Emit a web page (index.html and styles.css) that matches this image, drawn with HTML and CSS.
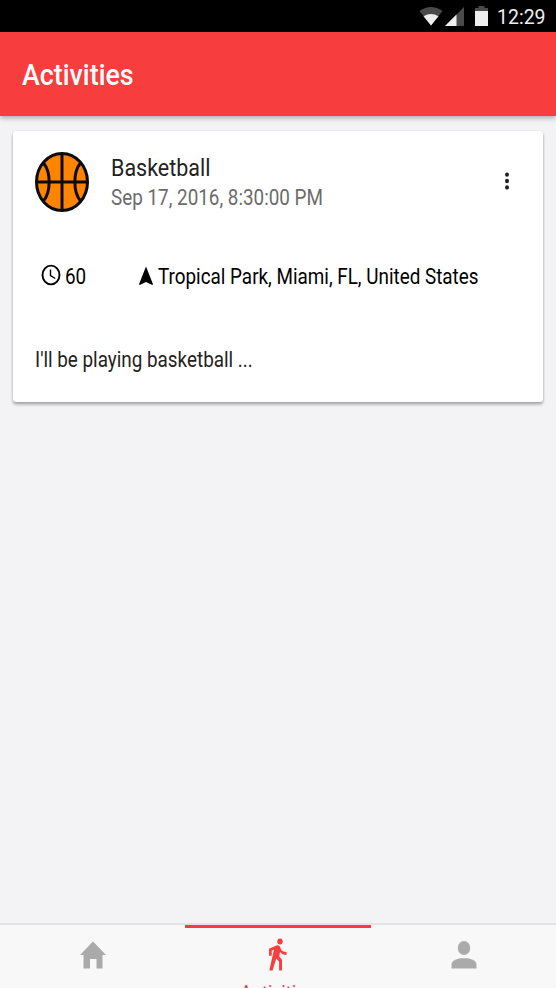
FILE: index.html
```html
<!DOCTYPE html>
<html lang="en">
<head>
<meta charset="utf-8">
<title>Activities</title>
<link rel="stylesheet" href="styles.css">
</head>
<body>
<div class="status">
  <svg class="wifi" width="24" height="19" viewBox="0 0 24 19"><path fill="#4a4a4a" d="M.5 4Q12-4 23.500 4L12 18.500z"/><path fill="#eee" d="M4.500 9.200Q12 5 19.500 9.200L12 18.500z"/></svg>
  <svg class="signal" width="19" height="19" viewBox="0 0 19 19"><path fill="#4a4a4a" d="M19 0v19H0z"/><path fill="#eee" d="M11.500 7.500V19H0z"/></svg>
  <svg class="battery" width="13" height="20" viewBox="0 0 13 20"><path fill="#4a4a4a" d="M3.500 0h6v2H13v3H0V2h3.500z"/><path fill="#eee" d="M0 5h13v15H0z"/></svg>
  <span class="clock">12:29</span>
</div>
<header class="header"><h1 class="narrow">Activities</h1></header>
<main class="content">
  <article class="card">
    <div class="item">
      <svg class="ball" width="54" height="60" viewBox="0 0 54 60" fill="none" stroke="#0b0b0b" stroke-width="3"><ellipse cx="27" cy="30" rx="25.500" ry="28.500" fill="#ff8400"/><path d="M27 1.500v57M1.500 30h51M8.500 11C16 20 16 40 8.500 49M45.500 11C38 20 38 40 45.500 49"/></svg>
      <div class="heading">
        <h2 class="narrow">Basketball</h2>
        <p class="narrow">Sep 17, 2016, 8:30:00 PM</p>
      </div>
      <svg class="more" width="6" height="18" viewBox="0 0 6 18" fill="#222"><ellipse cx="3" cy="2.600" rx="2" ry="2.200"/><ellipse cx="3" cy="9" rx="2" ry="2.200"/><ellipse cx="3" cy="15.400" rx="2" ry="2.200"/></svg>
    </div>
    <div class="details">
      <div class="duration">
        <svg width="20" height="22" viewBox="0 0 20 22" fill="none" stroke="#000"><ellipse cx="10" cy="11" rx="8.500" ry="9.400" stroke-width="1.900"/><path d="M9.500 5.500V11.500l4.800 3" stroke-width="1.400"/></svg>
        <span class="narrow">60</span>
      </div>
      <div class="place">
        <svg width="16" height="20" viewBox="0 0 16 20"><path d="M8 .5L15 18.300l-.7.700L8 16l-6.300 3-.7-.7z"/></svg>
        <span class="narrow">Tropical Park, Miami, FL, United States</span>
      </div>
    </div>
    <p class="note narrow">I'll be playing basketball ...</p>
  </article>
</main>
<nav class="tabs">
  <a class="tab"><svg width="26" height="28" viewBox="0 0 26 28"><path fill="#aaa" d="M13 .5L26 14h-3.500v13.500h-6V18h-6.500v9.500H3.500V14H0z"/></svg><span class="narrow">Home</span></a>
  <a class="tab active"><svg width="20" height="34" viewBox="0 0 20 34"><ellipse cx="12" cy="3.600" rx="2.700" ry="3" fill="#f73d3d"/><path fill="#f73d3d" d="M8.500 7.500C10 7 11.300 7.500 12 9l1.500 3.300q1.200 1.700 5 1.700v2.900q-4.200 0-6.500-2.900l-.8 4.500 2.800 3.300V32.500h-2.900v-8.700L8.200 20.500 4.600 32.500H1.300L6 11.500l-2.300 1.200v5H1v-7z"/></svg><span class="narrow">Activities</span></a>
  <a class="tab"><svg width="26" height="28" viewBox="0 0 26 28" fill="#aaa"><ellipse cx="13" cy="7" rx="6.200" ry="7"/><path d="M.5 27.500v-4C.5 19 7 17.200 13 17.200s12.500 1.800 12.500 6.300v4z"/></svg><span class="narrow">Profile</span></a>
</nav>
</body>
</html>
```
FILE: styles.css
```css
* { box-sizing: border-box; margin: 0; padding: 0; }
body {
  height: 988px;
  display: flex;
  flex-direction: column;
  overflow: hidden;
  background: #f3f3f6;
  font-family: Roboto, sans-serif;
  color: #222;
}
svg { flex: none; }
.narrow { white-space: nowrap; transform: scaleX(.877); transform-origin: left center; }
.status {
  flex: none;
  height: 32px;
  padding: 0 10px 0 419px;
  display: flex;
  align-items: flex-start;
  background: #000;
}
.wifi { margin-top: 7px; }
.signal { margin: 7px 0 0 2px; }
.battery { margin: 6px 0 0 11px; }
.clock { margin-left: 9px; font-size: 19.5px; line-height: 36px; color: #eee; }
.header {
  flex: none;
  height: 84px;
  padding-left: 22px;
  background: #f73d3d;
  box-shadow: 0 2px 5px rgba(0, 0, 0, .3);
  z-index: 1;
}
.header h1 { font-size: 29px; font-weight: 500; line-height: 86px; color: #fff; transform: scaleX(.925); }
.content { flex: 1; min-height: 0; padding: 15px 13px; }
.card {
  height: 271px;
  padding: 21px 22px;
  background: #fff;
  border-radius: 3px;
  box-shadow: 0 3px 3px rgba(0, 0, 0, .2), 0 1px 3px rgba(0, 0, 0, .2);
}
.item { display: flex; height: 60px; }
.heading { flex: 1; margin-left: 22px; padding-top: 1px; }
.heading h2 { font-size: 24.5px; font-weight: 400; line-height: 30px; }
.heading p { font-size: 21.5px; line-height: 30px; color: #6b6b6b; }
.more { margin: 20px 11px 0 0; }
.details { display: flex; height: 30px; margin-top: 49px; color: #000; }
.duration, .place { display: flex; line-height: 31px; font-size: 21.5px; }
.duration { flex: none; width: 97px; padding-left: 6px; }
.duration svg { margin: 3px 4px 0 0; }
.place { flex: 1; min-width: 0; padding-left: 6px; }
.place svg { margin: 5px 4px 0 0; }
.note { margin-top: 54px; font-size: 21.5px; line-height: 30px; }
.tabs {
  flex: none;
  display: flex;
  height: 65px;
  border-top: 2px solid #e3e3e6;
  background: #f8f8f8;
  overflow: hidden;
}
.tab {
  flex: 1;
  display: flex;
  flex-direction: column;
  align-items: center;
  padding-top: 16px;
  color: #aaa;
  font-size: 18px;
}
.tab span { margin-top: 16px; line-height: 22px; transform-origin: center; }
.tab.active {
  flex: 0 0 186px;
  padding-top: 10px;
  border-top: 3px solid #f73d3d;
  color: #f73d3d;
  font-size: 20px;
}
.tab.active span { margin-top: 10px; transform: scaleX(.92); }
```
